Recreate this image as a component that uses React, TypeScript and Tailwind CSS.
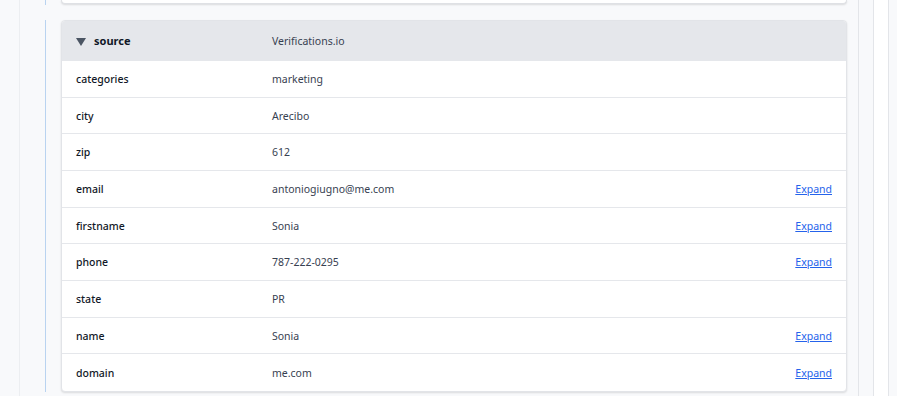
import React from "react";

const rows: { k: string; v: string; expand?: boolean }[] = [
  { k: "categories", v: "marketing" },
  { k: "city", v: "Arecibo" },
  { k: "zip", v: "612" },
  { k: "email", v: "antoniogiugno@me.com", expand: true },
  { k: "firstname", v: "Sonia", expand: true },
  { k: "phone", v: "787-222-0295", expand: true },
  { k: "state", v: "PR" },
  { k: "name", v: "Sonia", expand: true },
  { k: "domain", v: "me.com", expand: true },
];

export default function App() {
  return (
    <div
      className="flex h-[396px] w-[897px] overflow-hidden bg-[#f8f9fb] text-[10.5px] text-[#1f2937]"
      style={{ fontFamily: '"Noto Sans", "Open Sans", sans-serif' }}
    >
      <div className="w-[19px] shrink-0" />
      <div className="flex w-[840px] shrink-0 flex-col border-l border-r border-l-[#eceef1] border-r-[#e3e5e9] pl-[25px] pr-[11px]">
        <div className="h-[5px] shrink-0 border-l border-[#b9d3f0] pl-[15px]">
          <div className="h-[4px] rounded-b-[4px] border-x border-b border-[#dfe1e5] bg-white shadow-[0_1px_2px_rgba(0,0,0,0.12)]" />
        </div>
        <div className="mt-[15px] shrink-0 border-l border-[#b9d3f0] pl-[15px]">
          <div className="overflow-hidden rounded-[4px] border border-[#e2e4e8] bg-white shadow-[0_1px_2px_rgba(0,0,0,0.12)]">
            <div className="flex h-[40px] items-center bg-[#e5e7eb] pt-[1px]">
              <div className="flex w-[210px] shrink-0 items-center gap-[8px] pl-[14px]">
                <svg width="10" height="8" viewBox="0 0 10 8" className="shrink-0">
                  <path d="M0 0 H10 L5 8 Z" fill="#4b5563" />
                </svg>
                <span className="text-[11px] font-bold text-[#111827]">source</span>
              </div>
              <div className="text-[#374151]">Verifications.io</div>
            </div>
            {rows.map((r, i) => (
              <div
                key={r.k}
                className={`flex h-[36.67px] items-center pt-[2px] ${i < rows.length - 1 ? "border-b border-[#e5e7eb]" : ""}`}
              >
                <div className="w-[210px] shrink-0 pl-[14px] font-[500] text-[#111827]">{r.k}</div>
                <div className="flex-1 text-[#374151]">{r.v}</div>
                {r.expand && (
                  <a className="pr-[14px] text-[#2563eb] underline" href="#">
                    Expand
                  </a>
                )}
              </div>
            ))}
          </div>
        </div>
      </div>
      <div className="w-[15px] shrink-0 border-r border-[#e3e5e9]" />
      <div className="w-[15px] shrink-0 border-r border-[#e3e5e9] bg-white" />
      <div className="flex-1" />
    </div>
  );
}
